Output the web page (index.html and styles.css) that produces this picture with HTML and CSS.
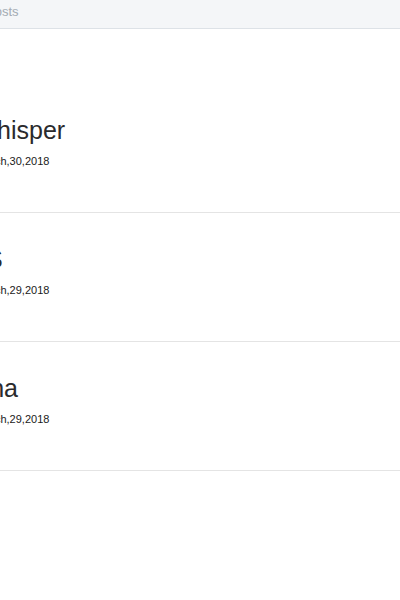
FILE: index.html
```html
<!DOCTYPE html>
<html lang="en">
<head>
<meta charset="utf-8">
<title>Posts</title>
<link rel="stylesheet" href="styles.css">
</head>
<body>
  <header class="topbar">
    <span class="crumb">Posts</span>
  </header>
  <main class="post-list">
    <article class="post">
      <h2 class="post-title">Whisper</h2>
      <p class="post-date">March,30,2018</p>
    </article>
    <article class="post">
      <h2 class="post-title">JS</h2>
      <p class="post-date">March,29,2018</p>
    </article>
    <article class="post">
      <h2 class="post-title">Ana</h2>
      <p class="post-date">March,29,2018</p>
    </article>
  </main>
</body>
</html>
```

FILE: styles.css
```css
html, body {
  margin: 0;
  padding: 0;
  background: #ffffff;
  overflow: hidden;
  font-family: "Liberation Sans", Arial, Helvetica, sans-serif;
}

.topbar {
  box-sizing: border-box;
  height: 29px;
  padding-top: 4px;
  background: #f4f6f8;
  border-bottom: 1px solid #dde2e7;
}

.crumb {
  display: block;
  margin-left: -14px;
  font-size: 13px;
  line-height: 1.2;
  color: #a3abb3;
}

.post-list {
  margin-top: 55px;
}

.post {
  padding: 31px 0 43.8px;
  border-bottom: 1px solid #e4e4e4;
}

.post-title {
  margin: 0 0 10px -26.5px;
  font-size: 25px;
  line-height: 1.2;
  font-weight: normal;
  color: #2a2a2c;
  white-space: nowrap;
}

.post-date {
  margin: 0 0 0 -24px;
  font-size: 11px;
  line-height: 1.2;
  color: #1a1a1a;
  white-space: nowrap;
}
```
